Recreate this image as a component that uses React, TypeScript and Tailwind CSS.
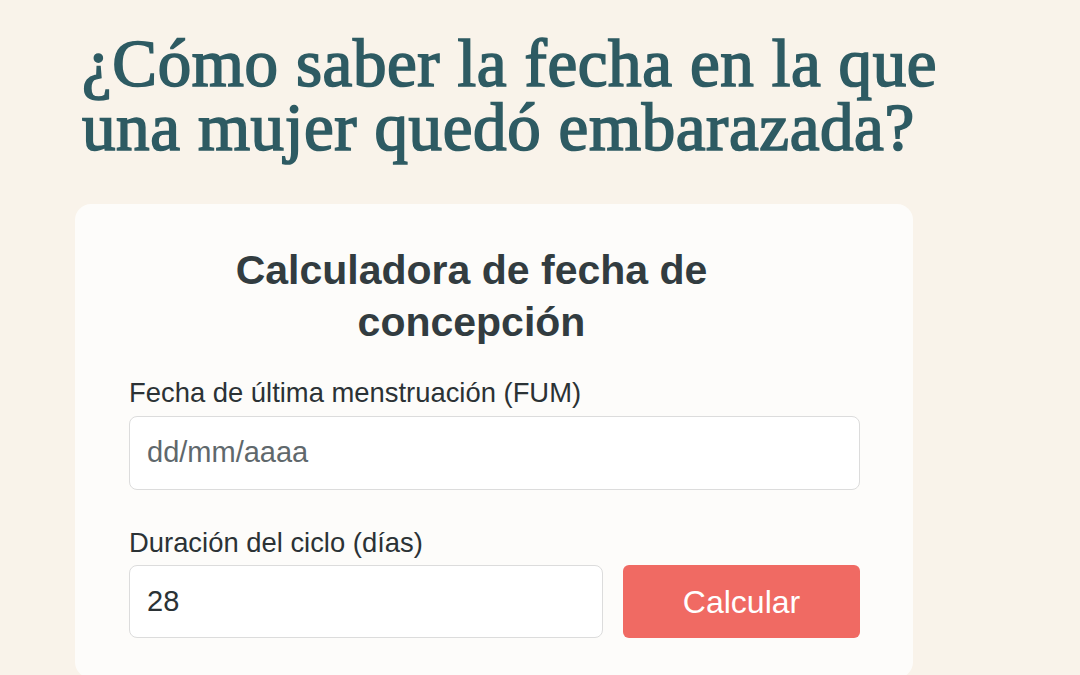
import React from "react";

const ConceptionCalculator = () => {
  return (
    <div className="w-[838px] rounded-2xl bg-[#fdfcfa] pt-[40px] pb-10 pl-[54px] pr-[53px]">
      <h2 className="pr-[46px] text-center font-['Liberation_Sans',sans-serif] text-[41px] font-bold leading-[52px] text-[#323c40]">
        Calculadora de fecha de
        <br />
        concepción
      </h2>

      <label className="mt-[28px] block font-['Liberation_Sans',sans-serif] text-[27.4px] leading-[34px] text-[#2b3235]">
        Fecha de última menstruación (FUM)
      </label>
      <div className="mt-[6px] flex h-[74px] items-center rounded-lg border border-[#dcdcdc] bg-white px-[17px] font-['Liberation_Sans',sans-serif] text-[29px] text-[#5f686c]">
        dd/mm/aaaa
      </div>

      <label className="mt-[36px] block font-['Liberation_Sans',sans-serif] text-[27.4px] leading-[34px] text-[#2b3235]">
        Duración del ciclo (días)
      </label>
      <div className="mt-[5px] flex gap-5">
        <div className="flex h-[73px] flex-1 items-center rounded-lg border border-[#dcdcdc] bg-white px-[17px] font-['Liberation_Sans',sans-serif] text-[29px] text-[#2b3235]">
          28
        </div>
        <button className="h-[73px] w-[237px] rounded-md bg-[#f06a63] font-['Liberation_Sans',sans-serif] text-[32px] text-white">
          Calcular
        </button>
      </div>
    </div>
  );
};

export default function App() {
  return (
    <div className="h-[675px] w-[1080px] overflow-hidden bg-[#f9f3ea]">
      <h1 className="pl-[82px] pt-[31px] font-['Liberation_Serif',serif] text-[67px] leading-[64px] tracking-[0.6px] text-[#2e5b63] [-webkit-text-stroke:1.7px_#2e5b63]">
        <span className="block h-[64px]">¿Cómo saber la fecha en la que</span>
        <span className="block h-[64px]">una mujer quedó embarazada?</span>
      </h1>
      <div className="ml-[75px] mt-[45px]">
        <ConceptionCalculator />
      </div>
    </div>
  );
}
